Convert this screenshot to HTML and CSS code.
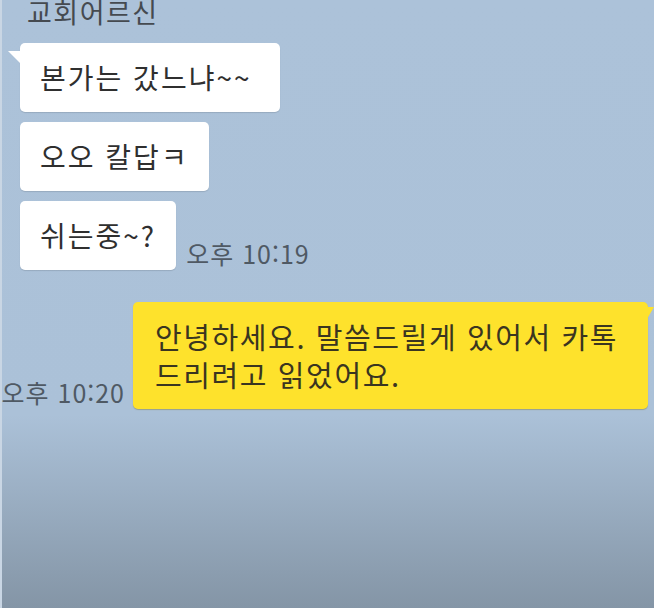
FILE: index.html
```html
<!DOCTYPE html>
<html lang="ko">
<head>
  <meta charset="UTF-8">
  <meta name="viewport" content="width=device-width, initial-scale=1.0">
  <title>채팅</title>
  <link rel="stylesheet" href="styles.css">
</head>
<body>
  <div class="chat">
    <!-- Received messages -->
    <div class="name">교회어르신</div>
    <div class="received">
      <div class="row">
        <div class="bubble first">본가는 갔느냐~~</div>
      </div>
      <div class="row">
        <div class="bubble">오오 칼답ㅋ</div>
      </div>
      <div class="row">
        <div class="bubble">쉬는중~?</div>
        <span class="time">오후 10:19</span>
      </div>
    </div>

    <!-- Sent message -->
    <div class="sent">
      <span class="time">오후 10:20</span>
      <div class="bubble mine">안녕하세요. 말씀드릴게 있어서 카톡<br>드리려고 읽었어요.</div>
    </div>
  </div>
</body>
</html>
```

FILE: styles.css
```css
/* General Styles */
body {
  margin: 0;
  padding: 0;
  font-family: "Noto Sans CJK KR", "Noto Sans", sans-serif;
}

.chat {
  width: 654px;
  height: 608px;
  overflow: hidden;
  box-shadow: inset 2px 0 0 #c9d6e4;
  background: linear-gradient(to bottom, #acc2d9 0, #abc1d8 415px, #8495a6 608px);
}

.name {
  padding-left: 27px;
  margin-top: -4px;
  font-size: 27px;
  line-height: 32px;
  letter-spacing: 1.5px;
  color: #454a50;
}

.received {
  display: flex;
  flex-direction: column;
  gap: 10px;
  padding-left: 20px;
  margin-top: 15px;
}

.row {
  display: flex;
  align-items: flex-end;
  gap: 10px;
}

.bubble {
  position: relative;
  flex-shrink: 0;
  background: #fff;
  border-radius: 5px;
  padding: 14px 20px 15px;
  font-size: 28px;
  line-height: 40px;
  letter-spacing: 2px;
  color: #2f2f2f;
  box-shadow: 0 1px 1px rgba(0, 0, 0, 0.12);
}

/* Tail on first received bubble */
.bubble.first::before {
  content: "";
  position: absolute;
  left: -12px;
  top: 8px;
  width: 13px;
  height: 13px;
  background: #fff;
  clip-path: polygon(0 0, 100% 0, 100% 100%);
}

.bubble.first {
  padding-right: 28px;
}

.time {
  white-space: nowrap;
  font-size: 25px;
  line-height: 30px;
  letter-spacing: 1px;
  color: #4f5964;
  margin-bottom: 2px;
}

/* Sent Section */
.sent {
  display: flex;
  align-items: flex-end;
  justify-content: flex-end;
  gap: 8px;
  padding-right: 6px;
  margin-top: 32px;
}

.bubble.mine {
  width: 515px;
  box-sizing: border-box;
  background: #fee22c;
  padding: 15px 22px 16px;
  font-size: 29px;
  line-height: 38px;
  letter-spacing: 1.6px;
  color: #3a3520;
  box-shadow: 0 1px 1px rgba(120, 100, 0, 0.35);
}

.bubble.mine::after {
  content: "";
  position: absolute;
  right: -6px;
  top: 5px;
  width: 7px;
  height: 12px;
  background: #fee22c;
  clip-path: polygon(0 0, 100% 0, 0 100%);
}
```
